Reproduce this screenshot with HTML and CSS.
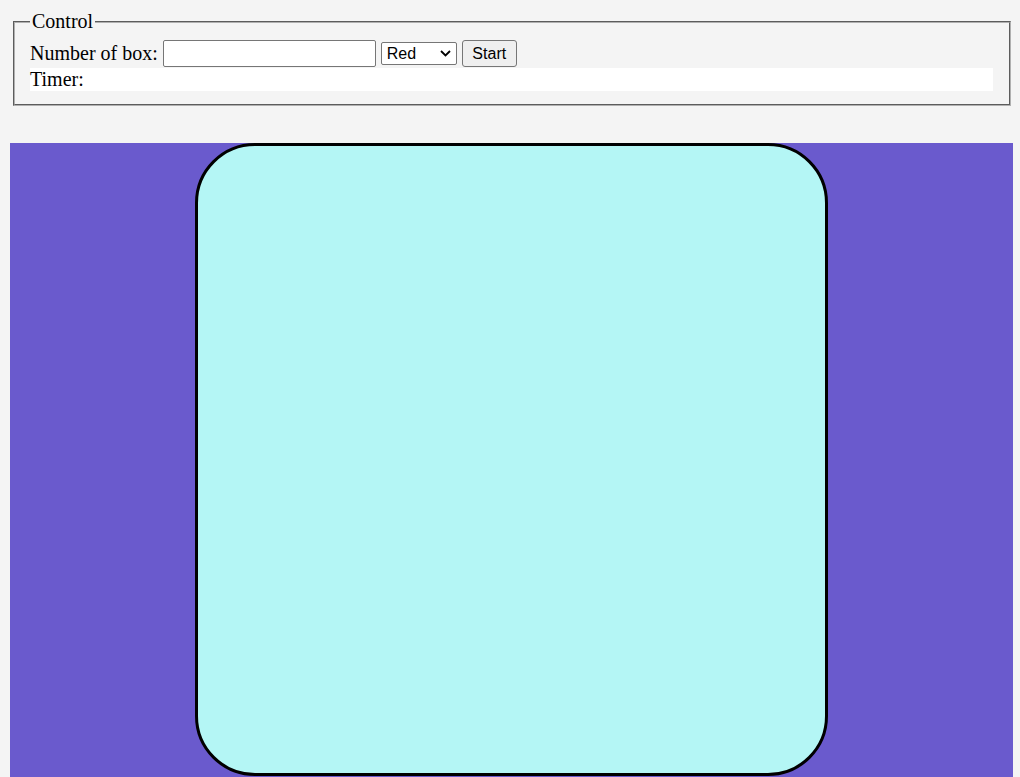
FILE: index.html
```html
<!DOCTYPE html>
<html>
<head>
<meta charset="utf-8">
<title>Boxes</title>
<link rel="stylesheet" href="styles.css">
</head>
<body>
<div class="page">
  <fieldset class="control">
    <legend class="control-legend">Control</legend>
    <div class="control-row">
      <label class="control-label" for="count">Number of box:</label>
      <input class="count-input" id="count" type="text">
      <span class="select-wrap">
        <select class="color-select">
          <option>Red</option>
          <option>Green</option>
          <option>Blue</option>
        </select>
        <svg class="select-arrow" width="11" height="7" viewBox="0 0 11 7" aria-hidden="true">
          <path d="M1 1 L5.5 5.5 L10 1" fill="none" stroke="#000" stroke-width="1.8"/>
        </svg>
      </span>
      <button class="start-btn" type="button">Start</button>
    </div>
    <div class="timer">Timer:</div>
  </fieldset>
  <div class="stage">
    <div class="box"></div>
  </div>
</div>
</body>
</html>
```
FILE: styles.css
```css
html, body {
  margin: 0;
  padding: 0;
  background: #f4f4f4;
  overflow: hidden;
}

.page {
  padding: 10px 7px 0 10px;
  font-family: "Liberation Serif", "Times New Roman", serif;
  font-size: 20px;
  color: #000;
}

.control {
  margin: 0 2px 0 3px;
  border: 2px groove #b0b0b0;
  padding: 7px 16px 13px 15px;
}

.control-legend {
  padding: 0 2px;
  line-height: 23px;
}

.control-row {
  display: flex;
  align-items: center;
  gap: 5px;
  height: 27px;
}

.control-label {
  line-height: 23px;
}

.count-input {
  box-sizing: border-box;
  width: 213px;
  height: 27px;
  margin: 0;
  border: 1px solid #767676;
  border-radius: 2px;
  background: #fff;
  font-family: "Liberation Sans", Arial, sans-serif;
  font-size: 16px;
}

.select-wrap {
  position: relative;
  display: inline-flex;
}

.color-select {
  box-sizing: border-box;
  width: 76px;
  height: 23px;
  margin: 0;
  padding: 0 0 0 5px;
  border: 1px solid #767676;
  border-radius: 2px;
  background: #fff;
  color: #000;
  -webkit-appearance: none;
  appearance: none;
  font-family: "Liberation Sans", Arial, sans-serif;
  font-size: 16px;
  line-height: 21px;
}

.select-arrow {
  position: absolute;
  right: 6px;
  top: 8px;
  pointer-events: none;
}

.start-btn {
  box-sizing: border-box;
  width: 55px;
  height: 27px;
  margin: 0;
  padding: 0;
  border: 1px solid #767676;
  border-radius: 3px;
  background: #efefef;
  color: #000;
  font-family: "Liberation Sans", Arial, sans-serif;
  font-size: 16px;
}

.timer {
  margin-top: 1px;
  height: 23px;
  line-height: 23px;
  background: #fff;
}

.stage {
  margin-top: 37px;
  height: 640px;
  background: #6a5acd;
}

.box {
  box-sizing: border-box;
  width: 633px;
  height: 633px;
  margin: 0 auto;
  border: 3px solid #000;
  border-radius: 60px;
  background: #b4f6f5;
}
```
